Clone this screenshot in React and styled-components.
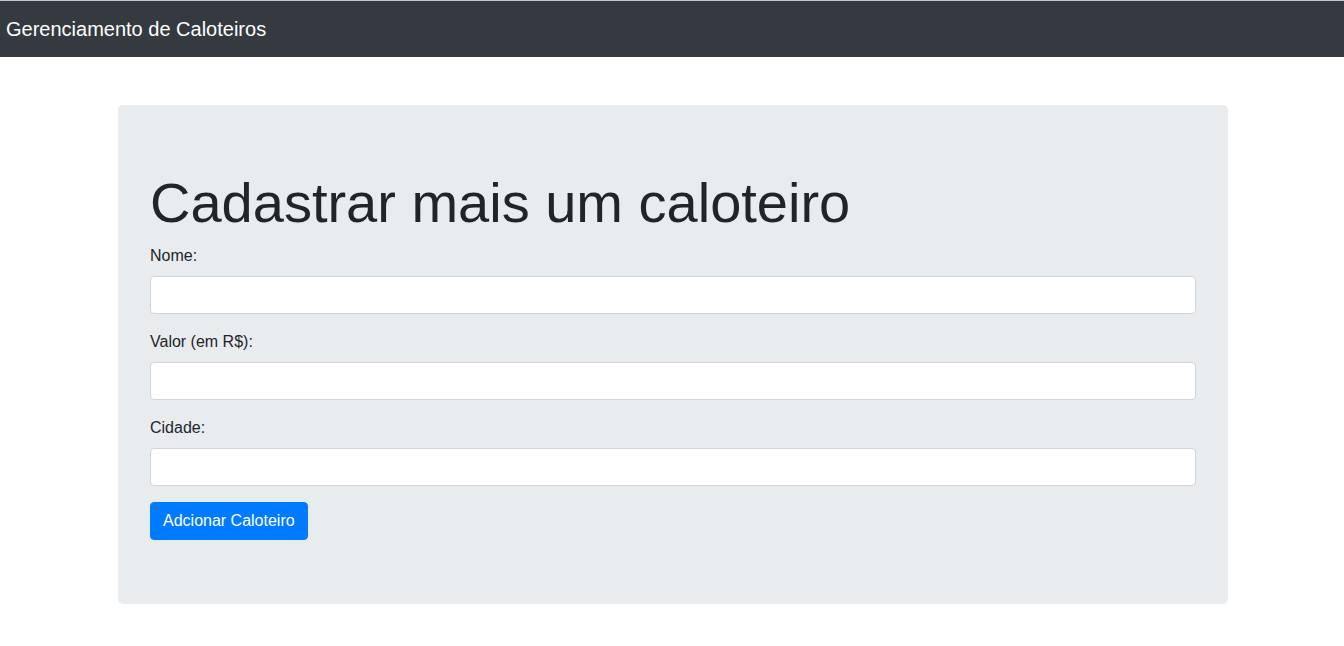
import React from "react";
import styled, { createGlobalStyle } from "styled-components";

const GlobalStyle = createGlobalStyle`
  *, *::before, *::after {
    box-sizing: border-box;
  }
  body {
    margin: 0;
    font-family: "Liberation Sans", Arial, sans-serif;
    font-size: 16px;
    line-height: 1.5;
    color: #212529;
    background: #fff;
  }
`;

const Navbar = styled.nav`
  display: flex;
  align-items: center;
  height: 57px;
  padding: 8px 6px;
  background: #343a40;
  border-top: 1px solid #c8c8c8;
`;

const Brand = styled.a`
  font-size: 20px;
  line-height: 30px;
  padding: 5px 0;
  color: #fff;
  text-decoration: none;
`;

const Container = styled.main`
  width: 1140px;
  margin: 48px auto 0;
  padding: 0 14px 0 16px;
`;

const Jumbotron = styled.section`
  background: #e9ecef;
  border-radius: 4.8px;
  padding: 64px 32px;
`;

const Title = styled.h1`
  margin: 0 0 8px;
  font-size: 56px;
  font-weight: 300;
  line-height: 1.2;
`;

const FormGroup = styled.div`
  margin-bottom: 16px;
`;

const Label = styled.label`
  display: block;
  margin-bottom: 8px;
`;

const Input = styled.input`
  display: block;
  width: 100%;
  height: 38px;
  padding: 6px 12px;
  font: inherit;
  color: #495057;
  background: #fff;
  border: 1px solid #ced4da;
  border-radius: 4px;
`;

const Button = styled.button`
  display: inline-block;
  padding: 6px 12px;
  font: inherit;
  line-height: 1.5;
  color: #fff;
  background: #007bff;
  border: 1px solid #007bff;
  border-radius: 4px;
  cursor: pointer;
`;

const fields = [
  { id: "nome", label: "Nome:" },
  { id: "valor", label: "Valor (em R$):" },
  { id: "cidade", label: "Cidade:" },
];

const App = () => {
  return (
    <>
      <GlobalStyle />
      <Navbar>
        <Brand href="#">Gerenciamento de Caloteiros</Brand>
      </Navbar>
      <Container>
        <Jumbotron>
          <Title>Cadastrar mais um caloteiro</Title>
          <form onSubmit={(e) => e.preventDefault()}>
            {fields.map((f) => (
              <FormGroup key={f.id}>
                <Label htmlFor={f.id}>{f.label}</Label>
                <Input id={f.id} type="text" />
              </FormGroup>
            ))}
            <Button type="submit">Adcionar Caloteiro</Button>
          </form>
        </Jumbotron>
      </Container>
    </>
  );
};

export default App;
